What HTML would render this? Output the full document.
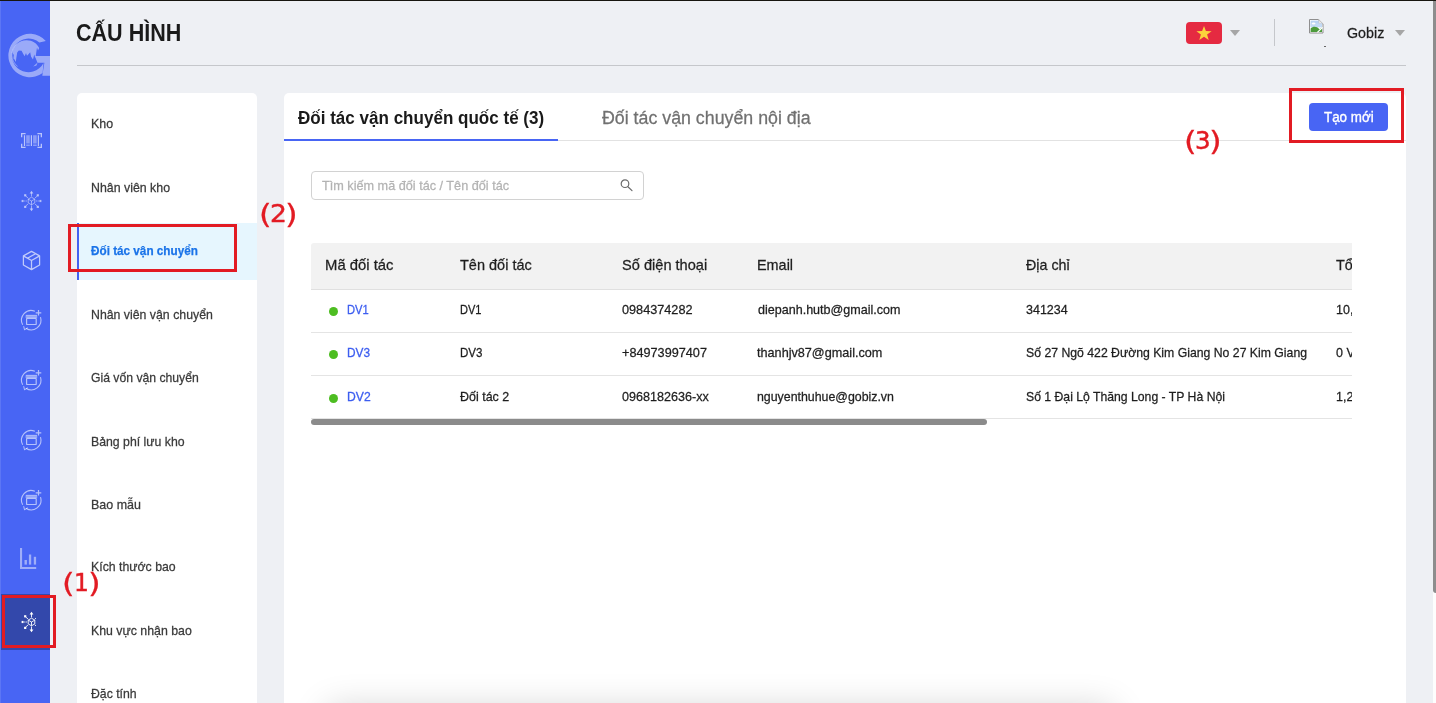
<!DOCTYPE html>
<html lang="vi">
<head>
<meta charset="utf-8">
<title>Cấu hình - Đối tác vận chuyển</title>
<style>
*{box-sizing:border-box;margin:0;padding:0}
html,body{width:1436px;height:703px;overflow:hidden;background:#eef0f4;font-family:"Liberation Sans",sans-serif;color:#222}
.a{position:absolute}
.t{position:absolute;white-space:nowrap;transform-origin:0 0;-webkit-text-stroke:.26px currentColor}
#r0c0,#r1c0,#r2c0{-webkit-text-stroke:.3px currentColor}
#title,#tab1{-webkit-text-stroke:0}
#m2{-webkit-text-stroke:.25px currentColor}
.lb{-webkit-text-stroke:.5px currentColor}
.lp{-webkit-text-stroke:.25px currentColor}
#btnt{-webkit-text-stroke:.35px currentColor}
#topline{left:0;top:0;width:1436px;height:1px;background:#17150f}
#topline2{left:50px;top:1px;width:1383px;height:1px;background:#f7f8fb}
#side{left:0;top:1px;width:50px;height:702px;background:#4865f4}
#sideedge{left:0;top:1px;width:1px;height:702px;background:#5c76f5}
#side-active{left:0;top:594px;width:50px;height:56px;background:#3348ab}
#hr{left:77px;top:65px;width:1329px;height:1px;background:#c5c7cb}
#menu{left:77px;top:93px;width:180px;height:620px;background:#fff;border-radius:5px}
#menu-active{left:77px;top:223px;width:180px;height:57px;background:#e6f6fe;border-left:2px solid #4461f2}
#main{left:284px;top:93px;width:1122px;height:620px;background:#fff;border-radius:5px}
#tabline{left:284px;top:140px;width:1122px;height:1px;background:#e2e2e2}
#tabink{left:284px;top:139px;width:274px;height:2px;background:#4865f4}
#btn{left:1309px;top:103px;width:79px;height:28px;background:#4865f4;border-radius:4px}
.rb{position:absolute;border:3px solid #e21b23}
#search{left:311px;top:171px;width:333px;height:29px;border:1px solid #d2d2d2;border-radius:4px;background:#fff}
#thead{left:311px;top:243px;width:1041px;height:47px;background:#f2f2f2;border-bottom:1px solid #e0e0e0;border-radius:3px 0 0 0}
.rl{position:absolute;left:311px;width:1041px;height:1px;background:#e4e4e4}
.dot{position:absolute;left:329px;width:9px;height:9px;border-radius:50%;background:#4dbd21}
#hscroll{left:311px;top:419px;width:676px;height:6px;border-radius:3px;background:#8b8b8b}
#vtrack{left:1433px;top:1px;width:3px;height:702px;background:#fdfdfd}
#vthumb{left:1433px;top:1px;width:3px;height:592px;background:#8d8d8d;border-radius:0 0 0 3px}
#clipcol{left:1336px;top:243px;width:16px;height:176px;overflow:hidden;will-change:transform}
#clipcol div{position:absolute;left:0;white-space:nowrap;color:#1e1e1e;-webkit-text-stroke:.26px currentColor;transform:scaleX(.96);transform-origin:0 0}
#flag{left:1186px;top:22px;width:36px;height:22px;border-radius:4px;background:#e52a41}
.caret{position:absolute;width:0;height:0;border-left:5px solid transparent;border-right:5px solid transparent;border-top:6px solid #a6a6a6}
#vdiv{left:1274px;top:19px;width:1px;height:27px;background:#c5c7cb}
#botshadow{left:326px;top:707px;width:788px;height:40px;border-radius:10px;box-shadow:0 0 34px rgba(0,0,0,.17)}
</style>
</head>
<body>
<div class="a" id="side"></div>
<div class="a" id="side-active"></div>
<div class="a" id="sideedge"></div>
<div class="a" id="topline"></div>
<svg class="a" style="left:0;top:0" width="50" height="100" viewBox="0 0 50 100">
 <g opacity=".45" fill="#fff">
  <path d="M45.8 40.9A21.5 21.7 0 1 0 42.6 73L43.5 63A16.8 16.8 0 1 1 39.4 42.6Z"/>
  <path d="M34.8 56H50V75.7H42.3L44.4 62.8H37.5Z"/>
  <path d="M12.4 52.4C13 45.6 18.6 40.4 26.6 40.2C32.4 40.2 37.2 43.4 39.2 48L38 50.6L37 47.4L36.4 51.6L35.4 58L34.2 54.4L33 59.6L31 56.4L30.2 52.2L28.2 54.6L27 55.8L26 53L24.6 56.2L23 53.4L21.6 50.8L18.8 50.4L17.2 52.6L16.4 57.4L15.8 62L14.6 59.6L13.4 58.6L13.8 55Z"/>
  <path d="M33.2 66.4L37.6 62.6L36.4 65.6Z"/>
 </g>
 <path d="M17.6 66.4A14.6 14.6 0 0 1 16 44.6" fill="none" stroke="#fff" stroke-opacity=".35" stroke-width="1"/>
</svg>
<!-- barcode -->
<svg class="a" style="left:21px;top:133px" width="21" height="15" viewBox="0 0 21 15" fill="none" stroke="#fff" stroke-opacity=".62">
 <path stroke-width="1.3" d="M.65 4.2V.65H4.6M16.4 .65H20.35V4.2M.65 10.8V14.35H4.6M16.4 14.35H20.35V10.8"/>
 <path stroke-width="1.2" d="M3.5 2.2V12.9M10.4 2.2V12.9M17.4 2.2V12.9"/>
 <path stroke-width="3.6" stroke-opacity=".36" d="M7 2.2V10.4M7 11.4V12.9M13.9 2.2V10.4M13.9 11.4V12.9"/>
</svg>
<!-- hub -->
<svg class="a" style="left:20px;top:190px" width="22" height="22" viewBox="-11.5 -11 22 22" fill="none" stroke="#fff" stroke-opacity=".55" stroke-width=".85">
 <path d="M0-3.8L3.3-1.9V1.9L0 3.8L-3.3 1.9V-1.9ZM-3.3-1.9L0 0L3.3-1.9M0 0V3.8"/>
 <path d="M0-4.6V-8.4M0 4.6V8.4M-3.4-2.9L-6-5.2M3.4-2.9L6-5.2M-3.4 2.9L-6 5.2M3.4 2.9L6 5.2"/>
 <path stroke-dasharray="1.4 .7" d="M-4.6 0H-8.2M4.6 0H8.2"/>
 <g fill="#fff" fill-opacity=".58" stroke="none"><path d="M0-10.3L1.9-7.6H-1.9ZM0 10.3L1.9 7.6H-1.9Z"/><rect x="-7.4" y="-6.8" width="2.2" height="2.2"/><rect x="5.2" y="-6.8" width="2.2" height="2.2"/><rect x="-7.4" y="4.8" width="2.2" height="2.2"/><rect x="5.2" y="4.8" width="2.2" height="2.2"/><rect x="-9.9" y="-1.1" width="1.8" height="2.2"/><rect x="8.1" y="-1.1" width="1.8" height="2.2"/></g>
</svg>
<!-- box -->
<svg class="a" style="left:21px;top:250px" width="21" height="21" viewBox="-0.5 0 21 21" fill="none" stroke="#fff" stroke-opacity=".66" stroke-width="1.25" stroke-linejoin="round">
 <path d="M10 1.4L18.1 5.9V15L10 19.6L1.9 15V5.9ZM1.9 5.9L10 10.5L18.1 5.9M10 10.5V19.6M14.1 3.7L5.9 8.2"/>
</svg>
<!-- cycle box x4 -->
<svg class="a" style="left:18px;top:307px" width="26" height="26" viewBox="-13.3 -13.2 26 26" fill="none" stroke="#fff" stroke-opacity=".6" stroke-width="1.1">
 <path d="M-8.6 4.6A9.7 9.7 0 0 1 3.6-9"/>
 <path d="M9.2-3A9.7 9.7 0 0 1-5.4 8"/>
 <path d="M-7.6 6L-6.8 9.6L-3.6 7.6" stroke-width="1"/>
 <path d="M4.4-7.4H10M7.2-10.2V-4.6" stroke-width="1.2"/>
 <rect x="-4.7" y="-1.9" width="9.6" height="6.2" rx=".6" stroke-width="1.2"/>
 <rect x="-5.7" y="-5" width="11.6" height="2.9" rx=".5" fill="#fff" fill-opacity=".42" stroke="none"/><path d="M-5.5-4.9H5.7" stroke-width=".9" stroke-opacity=".45"/>
</svg>
<svg class="a" style="left:18px;top:367px" width="26" height="26" viewBox="-13.3 -13.2 26 26" fill="none" stroke="#fff" stroke-opacity=".6" stroke-width="1.1">
 <path d="M-8.6 4.6A9.7 9.7 0 0 1 3.6-9"/>
 <path d="M9.2-3A9.7 9.7 0 0 1-5.4 8"/>
 <path d="M-7.6 6L-6.8 9.6L-3.6 7.6" stroke-width="1"/>
 <path d="M4.4-7.4H10M7.2-10.2V-4.6" stroke-width="1.2"/>
 <rect x="-4.7" y="-1.9" width="9.6" height="6.2" rx=".6" stroke-width="1.2"/>
 <rect x="-5.7" y="-5" width="11.6" height="2.9" rx=".5" fill="#fff" fill-opacity=".42" stroke="none"/><path d="M-5.5-4.9H5.7" stroke-width=".9" stroke-opacity=".45"/>
</svg>
<svg class="a" style="left:18px;top:427px" width="26" height="26" viewBox="-13.3 -13.2 26 26" fill="none" stroke="#fff" stroke-opacity=".6" stroke-width="1.1">
 <path d="M-8.6 4.6A9.7 9.7 0 0 1 3.6-9"/>
 <path d="M9.2-3A9.7 9.7 0 0 1-5.4 8"/>
 <path d="M-7.6 6L-6.8 9.6L-3.6 7.6" stroke-width="1"/>
 <path d="M4.4-7.4H10M7.2-10.2V-4.6" stroke-width="1.2"/>
 <rect x="-4.7" y="-1.9" width="9.6" height="6.2" rx=".6" stroke-width="1.2"/>
 <rect x="-5.7" y="-5" width="11.6" height="2.9" rx=".5" fill="#fff" fill-opacity=".42" stroke="none"/><path d="M-5.5-4.9H5.7" stroke-width=".9" stroke-opacity=".45"/>
</svg>
<svg class="a" style="left:18px;top:487px" width="26" height="26" viewBox="-13.3 -13.2 26 26" fill="none" stroke="#fff" stroke-opacity=".6" stroke-width="1.1">
 <path d="M-8.6 4.6A9.7 9.7 0 0 1 3.6-9"/>
 <path d="M9.2-3A9.7 9.7 0 0 1-5.4 8"/>
 <path d="M-7.6 6L-6.8 9.6L-3.6 7.6" stroke-width="1"/>
 <path d="M4.4-7.4H10M7.2-10.2V-4.6" stroke-width="1.2"/>
 <rect x="-4.7" y="-1.9" width="9.6" height="6.2" rx=".6" stroke-width="1.2"/>
 <rect x="-5.7" y="-5" width="11.6" height="2.9" rx=".5" fill="#fff" fill-opacity=".42" stroke="none"/><path d="M-5.5-4.9H5.7" stroke-width=".9" stroke-opacity=".45"/>
</svg>
<!-- chart -->
<svg class="a" style="left:20px;top:548px" width="17" height="21" viewBox="0 0 17 21" fill="#fff" fill-opacity=".48">
 <path d="M0 0H2.1V18.9H16.2V21H0Z"/><rect x="4.5" y="12" width="2.4" height="4.6"/><rect x="8.9" y="6.5" width="2.3" height="10.1"/><rect x="13.8" y="8.8" width="2.3" height="7.8"/>
</svg>
<!-- active hub (clipped) -->
<svg class="a" style="left:20px;top:611px" width="16" height="22" viewBox="-11.5 -11 16 22" fill="none" stroke="#fff" stroke-width=".9">
 <path d="M0-3.8L3.3-1.9V1.9L0 3.8L-3.3 1.9V-1.9ZM-3.3-1.9L0 0L3.3-1.9M0 0V3.8"/>
 <path d="M0-4.6V-8.4M0 4.6V8.4M-3.4-2.9L-6-5.2M3.4-2.9L6-5.2M-3.4 2.9L-6 5.2M3.4 2.9L6 5.2"/>
 <path stroke-dasharray="1.4 .7" d="M-4.6 0H-8.2"/>
 <g fill="#fff" stroke="none"><path d="M0-10.3L1.9-7.6H-1.9ZM0 10.3L1.9 7.6H-1.9Z"/><rect x="-7.4" y="-6.8" width="2.2" height="2.2"/><rect x="-7.4" y="4.8" width="2.2" height="2.2"/><rect x="-9.9" y="-1.1" width="1.8" height="2.2"/></g>
</svg>

<div class="a" id="hr"></div>
<div class="a" id="flag"></div>
<svg class="a" style="left:1196px;top:25px" width="16" height="16" viewBox="0 0 16 16"><polygon fill="#fbd43c" points="8,0.9 9.9,6.1 15.6,6.2 11.1,9.6 12.7,14.9 8,11.8 3.3,14.9 4.9,9.6 0.4,6.2 6.1,6.1"/></svg>
<div class="caret" style="left:1230px;top:30px"></div>
<div class="a" id="vdiv"></div>
<svg class="a" style="left:1309px;top:19px" width="15" height="15" viewBox="0 0 15 15">
 <path d="M.5 .5H9.6L14 4.9V14H.5Z" fill="#fff" stroke="#8f8f8f" stroke-width="1"/>
 <path d="M9.6 .5V4.9H14" fill="#e8e8e8" stroke="#b0b0b0" stroke-width=".8"/>
 <rect x="1.6" y="1.6" width="8" height="6.4" fill="#b9d3f5"/>
 <rect x="1.6" y="4.4" width="11.4" height="4" fill="#c3daf6"/>
 <ellipse cx="4.6" cy="4.4" rx="1.9" ry="1" fill="#fff"/>
 <path d="M1.6 13V9.6C4 7 7.6 7 10.6 10.2L13 8.4V13Z" fill="#4c9b3c"/>
 <path d="M8.4 13.4L13.6 8.4" stroke="#fff" stroke-width="1.3"/>
</svg>
<div class="a" style="left:1324px;top:46px;width:2px;height:1px;background:#666"></div>

<div class="caret" style="left:1394.5px;top:30px"></div>

<div class="a" id="menu"></div>
<div class="a" id="menu-active"></div>
<div class="a" id="main"></div>
<div class="a" id="botshadow"></div>
<div class="a" id="tabline"></div>
<div class="a" id="tabink"></div>
<div class="a" id="btn"></div>
<div class="a" id="search"></div>
<svg class="a" style="left:619px;top:178px" width="16" height="16" viewBox="0 0 16 16" fill="none" stroke="#6a6a6a" stroke-width="1.2" stroke-linecap="round"><circle cx="6" cy="5.7" r="3.8"/><path d="M8.9 8.7 L13 12.6"/></svg>
<div class="a" id="thead"></div>
<div class="rl" style="top:332px"></div>
<div class="rl" style="top:375px"></div>
<div class="rl" style="top:418px"></div>
<div class="dot" style="top:307px"></div>
<div class="dot" style="top:350px"></div>
<div class="dot" style="top:394px"></div>
<div class="a" id="clipcol">
  <div style="top:11px;font-size:15px;line-height:21px">Tổng nợ</div>
  <div style="top:59px;font-size:13px;line-height:16px">10,000 VNĐ</div>
  <div style="top:102px;font-size:13px;line-height:16px">0 VNĐ</div>
  <div style="top:146px;font-size:13px;line-height:16px">1,200 VNĐ</div>
</div>
<div class="a" id="hscroll"></div>
<div id="tx" style="position:absolute;left:0;top:0;width:1436px;height:703px;will-change:transform">
<div class="t" id="title" style="left:76.10px;top:18.31px;font-size:24px;line-height:30px;color:#1a1a1a;font-family:'Liberation Sans',sans-serif;font-weight:bold;transform:scaleX(0.8975);">CẤU HÌNH</div>
<div class="t" id="gobiz" style="left:1347.28px;top:21.91px;font-size:15px;line-height:21px;color:#1f1f1f;font-family:'Liberation Sans',sans-serif;transform:scaleX(0.9512);">Gobiz</div>
<div class="t" id="m0" style="left:91.04px;top:114.00px;font-size:13px;line-height:19px;color:#3a3a3a;font-family:'Liberation Sans',sans-serif;transform:scaleX(0.9547);">Kho</div>
<div class="t" id="m1" style="left:91.05px;top:178.00px;font-size:13px;line-height:19px;color:#3a3a3a;font-family:'Liberation Sans',sans-serif;transform:scaleX(0.9506);">Nhân viên kho</div>
<div class="t" id="m2" style="left:91.27px;top:240.61px;font-size:13px;line-height:19px;color:#1a73e8;font-family:'Liberation Sans',sans-serif;font-weight:bold;transform:scaleX(0.9018);">Đối tác vận chuyển</div>
<div class="t" id="m3" style="left:91.05px;top:305.00px;font-size:13px;line-height:19px;color:#3a3a3a;font-family:'Liberation Sans',sans-serif;transform:scaleX(0.9472);">Nhân viên vận chuyển</div>
<div class="t" id="m4" style="left:91.39px;top:368.00px;font-size:13px;line-height:19px;color:#3a3a3a;font-family:'Liberation Sans',sans-serif;transform:scaleX(0.9380);">Giá vốn vận chuyển</div>
<div class="t" id="m5" style="left:91.06px;top:432.00px;font-size:13px;line-height:19px;color:#3a3a3a;font-family:'Liberation Sans',sans-serif;transform:scaleX(0.9444);">Bảng phí lưu kho</div>
<div class="t" id="m6" style="left:91.04px;top:494.60px;font-size:13px;line-height:19px;color:#3a3a3a;font-family:'Liberation Sans',sans-serif;transform:scaleX(0.9603);">Bao mẫu</div>
<div class="t" id="m7" style="left:91.05px;top:556.80px;font-size:13px;line-height:19px;color:#3a3a3a;font-family:'Liberation Sans',sans-serif;transform:scaleX(0.9466);">Kích thước bao</div>
<div class="t" id="m8" style="left:91.05px;top:620.60px;font-size:13px;line-height:19px;color:#3a3a3a;font-family:'Liberation Sans',sans-serif;transform:scaleX(0.9479);">Khu vực nhận bao</div>
<div class="t" id="m9" style="left:91.33px;top:683.91px;font-size:13px;line-height:19px;color:#3a3a3a;font-family:'Liberation Sans',sans-serif;transform:scaleX(0.9430);">Đặc tính</div>
<div class="t" id="tab1" style="left:298.00px;top:105.91px;font-size:18px;line-height:24px;color:#1a1a1a;font-family:'Liberation Sans',sans-serif;font-weight:bold;transform:scaleX(0.9467);">Đối tác vận chuyển quốc tế (3)</div>
<div class="t" id="tab2" style="left:601.61px;top:105.91px;font-size:18px;line-height:24px;color:#707070;font-family:'Liberation Sans',sans-serif;transform:scaleX(0.9876);">Đối tác vận chuyển nội địa</div>
<div class="t" id="btnt" style="left:1324.30px;top:106.81px;font-size:14px;line-height:20px;color:#fff;font-family:'Liberation Sans',sans-serif;transform:scaleX(0.9556);">Tạo mới</div>
<div class="t" id="ph" style="left:321.98px;top:176.00px;font-size:13px;line-height:19px;color:#b3b3b3;font-family:'Liberation Sans',sans-serif;transform:scaleX(0.9745);">Tìm kiếm mã đối tác / Tên đối tác</div>
<div class="t" id="h0" style="left:325.35px;top:254.11px;font-size:15px;line-height:21px;color:#1e1e1e;font-family:'Liberation Sans',sans-serif;transform:scaleX(0.9906);">Mã đối tác</div>
<div class="t" id="h1" style="left:460.23px;top:254.10px;font-size:15px;line-height:21px;color:#1e1e1e;font-family:'Liberation Sans',sans-serif;transform:scaleX(0.9671);">Tên đối tác</div>
<div class="t" id="h2" style="left:621.83px;top:254.10px;font-size:15px;line-height:21px;color:#1e1e1e;font-family:'Liberation Sans',sans-serif;transform:scaleX(0.9731);">Số điện thoại</div>
<div class="t" id="h3" style="left:757.21px;top:254.11px;font-size:15px;line-height:21px;color:#1e1e1e;font-family:'Liberation Sans',sans-serif;transform:scaleX(0.9608);">Email</div>
<div class="t" id="h4" style="left:1026.28px;top:254.11px;font-size:15px;line-height:21px;color:#1e1e1e;font-family:'Liberation Sans',sans-serif;transform:scaleX(0.9515);">Địa chỉ</div>
<div class="t" id="r0c0" style="left:346.84px;top:300.00px;font-size:13px;line-height:19px;color:#3d5ef0;font-family:'Liberation Sans',sans-serif;transform:scaleX(0.8592);">DV1</div>
<div class="t" id="r0c1" style="left:459.97px;top:300.00px;font-size:13px;line-height:19px;color:#1e1e1e;font-family:'Liberation Sans',sans-serif;transform:scaleX(0.8495);">DV1</div>
<div class="t" id="r0c2" style="left:622.17px;top:300.00px;font-size:13px;line-height:19px;color:#1e1e1e;font-family:'Liberation Sans',sans-serif;transform:scaleX(0.9754);">0984374282</div>
<div class="t" id="r0c3" style="left:757.50px;top:300.00px;font-size:13px;line-height:19px;color:#1e1e1e;font-family:'Liberation Sans',sans-serif;transform:scaleX(0.9650);">diepanh.hutb@gmail.com</div>
<div class="t" id="r0c4" style="left:1025.93px;top:300.00px;font-size:13px;line-height:19px;color:#1e1e1e;font-family:'Liberation Sans',sans-serif;transform:scaleX(0.9613);">341234</div>
<div class="t" id="r1c0" style="left:346.80px;top:343.00px;font-size:13px;line-height:19px;color:#3d5ef0;font-family:'Liberation Sans',sans-serif;transform:scaleX(0.9123);">DV3</div>
<div class="t" id="r1c1" style="left:459.92px;top:343.00px;font-size:13px;line-height:19px;color:#1e1e1e;font-family:'Liberation Sans',sans-serif;transform:scaleX(0.8910);">DV3</div>
<div class="t" id="r1c2" style="left:621.99px;top:343.00px;font-size:13px;line-height:19px;color:#1e1e1e;font-family:'Liberation Sans',sans-serif;transform:scaleX(0.9750);">+84973997407</div>
<div class="t" id="r1c3" style="left:757.17px;top:343.00px;font-size:13px;line-height:19px;color:#1e1e1e;font-family:'Liberation Sans',sans-serif;transform:scaleX(0.9733);">thanhjv87@gmail.com</div>
<div class="t" id="r1c4" style="left:1025.50px;top:343.00px;font-size:13px;line-height:19px;color:#1e1e1e;font-family:'Liberation Sans',sans-serif;transform:scaleX(0.9420);">Số 27 Ngõ 422 Đường Kim Giang No 27 Kim Giang</div>
<div class="t" id="r2c0" style="left:346.78px;top:386.61px;font-size:13px;line-height:19px;color:#3d5ef0;font-family:'Liberation Sans',sans-serif;transform:scaleX(0.9352);">DV2</div>
<div class="t" id="r2c1" style="left:460.02px;top:386.61px;font-size:13px;line-height:19px;color:#1e1e1e;font-family:'Liberation Sans',sans-serif;transform:scaleX(0.9593);">Đối tác 2</div>
<div class="t" id="r2c2" style="left:622.32px;top:386.61px;font-size:13px;line-height:19px;color:#1e1e1e;font-family:'Liberation Sans',sans-serif;transform:scaleX(0.9676);">0968182636-xx</div>
<div class="t" id="r2c3" style="left:757.26px;top:386.61px;font-size:13px;line-height:19px;color:#1e1e1e;font-family:'Liberation Sans',sans-serif;transform:scaleX(0.9507);">nguyenthuhue@gobiz.vn</div>
<div class="t" id="r2c4" style="left:1025.90px;top:386.61px;font-size:13px;line-height:19px;color:#1e1e1e;font-family:'Liberation Sans',sans-serif;transform:scaleX(0.9396);">Số 1 Đại Lộ Thăng Long - TP Hà Nội</div>
<div class="t lp" id="l1a" style="left:61.94px;top:566.75px;font-size:25px;line-height:31px;color:#e21b23;font-family:'DejaVu Sans',sans-serif;transform:scale(1.3000,1.0357);">(</div>
<div class="t lb" id="l1b" style="left:73.64px;top:566.91px;font-size:25px;line-height:31px;color:#e21b23;font-family:'DejaVu Sans',sans-serif;transform:scaleX(0.9341);">1</div>
<div class="t lp" id="l1c" style="left:87.79px;top:566.49px;font-size:25px;line-height:31px;color:#e21b23;font-family:'DejaVu Sans',sans-serif;transform:scale(1.3000,1.0728);">)</div>
<div class="t lp" id="l2a" style="left:258.65px;top:197.96px;font-size:25px;line-height:31px;color:#e21b23;font-family:'DejaVu Sans',sans-serif;transform:scale(1.3000,1.0280);">(</div>
<div class="t lb" id="l2b" style="left:270.11px;top:197.91px;font-size:25px;line-height:31px;color:#e21b23;font-family:'DejaVu Sans',sans-serif;transform:scaleX(1.0617);">2</div>
<div class="t lp" id="l2c" style="left:284.51px;top:197.79px;font-size:25px;line-height:31px;color:#e21b23;font-family:'DejaVu Sans',sans-serif;transform:scale(1.3000,1.0484);">)</div>
<div class="t lp" id="l3a" style="left:1183.56px;top:124.53px;font-size:25px;line-height:31px;color:#e21b23;font-family:'DejaVu Sans',sans-serif;transform:scale(1.3000,1.0492);">(</div>
<div class="t lb" id="l3b" style="left:1194.93px;top:125.10px;font-size:25px;line-height:31px;color:#e21b23;font-family:'DejaVu Sans',sans-serif;transform:scaleX(0.9795);">3</div>
<div class="t lp" id="l3c" style="left:1208.85px;top:124.68px;font-size:25px;line-height:31px;color:#e21b23;font-family:'DejaVu Sans',sans-serif;transform:scale(1.3000,1.0356);">)</div>
</div>
<div class="rb" style="left:2px;top:595px;width:54px;height:53px"></div>
<div class="rb" style="left:68px;top:224px;width:169px;height:48px"></div>
<div class="rb" style="left:1289px;top:88px;width:115px;height:55px"></div>
<div class="a" id="vtrack"></div>
<div class="a" id="vthumb"></div>
</body>
</html>
